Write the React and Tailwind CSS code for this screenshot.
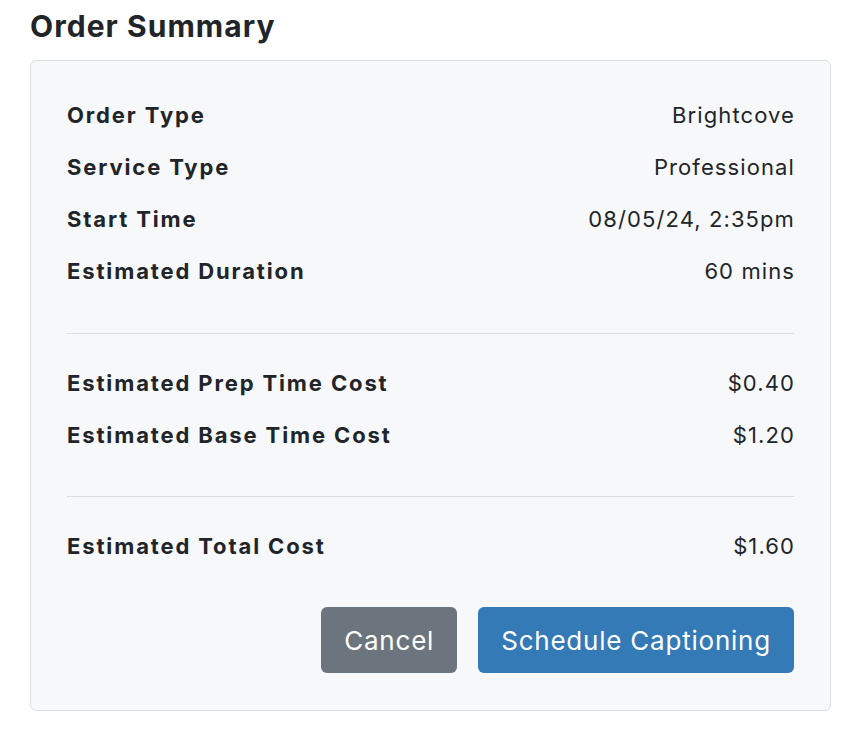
const details = [
  { label: 'Order Type', value: 'Brightcove' },
  { label: 'Service Type', value: 'Professional' },
  { label: 'Start Time', value: '08/05/24, 2:35pm' },
  { label: 'Estimated Duration', value: '60 mins' },
];

const costs = [
  { label: 'Estimated Prep Time Cost', value: '$0.40' },
  { label: 'Estimated Base Time Cost', value: '$1.20' },
];

const Row = ({ label, value }) => (
  <div className="flex h-[52px] items-center justify-between">
    <span className="font-bold tracking-[0.085em]">{label}</span>
    <span className="-mr-[1px] tracking-[0.05em]">{value}</span>
  </div>
);

export default function App() {
  return (
    <div className="min-h-[734px] w-[848px] bg-white text-[#212529] font-['Inter',sans-serif]">
      <div className="px-[30px]">
        <h2 className="flex h-[52px] items-center text-[30px] font-bold leading-none tracking-[0.035em]">
          Order Summary
        </h2>
        <div className="mt-[8px] w-[801px] rounded-md border border-[#dcdee0] bg-[#f7f8fa] px-[36px] pb-[37px] pt-[28px] text-[22px]">
          {details.map((d) => (
            <Row key={d.label} {...d} />
          ))}
          <hr className="mb-[23px] mt-[36px] border-[#dcdee0]" />
          {costs.map((d) => (
            <Row key={d.label} {...d} />
          ))}
          <hr className="mb-[23px] mt-[35px] border-[#dcdee0]" />
          <Row label="Estimated Total Cost" value="$1.60" />
          <div className="mt-[35px] flex justify-end gap-[21px]">
            <button className="h-[66px] rounded-md bg-[#6c757d] px-[23px] text-[26px] tracking-[0.03em] text-white">
              Cancel
            </button>
            <button className="h-[66px] rounded-md bg-[#337ab7] px-[23px] text-[26px] tracking-[0.03em] text-white">
              Schedule Captioning
            </button>
          </div>
        </div>
      </div>
    </div>
  );
}
